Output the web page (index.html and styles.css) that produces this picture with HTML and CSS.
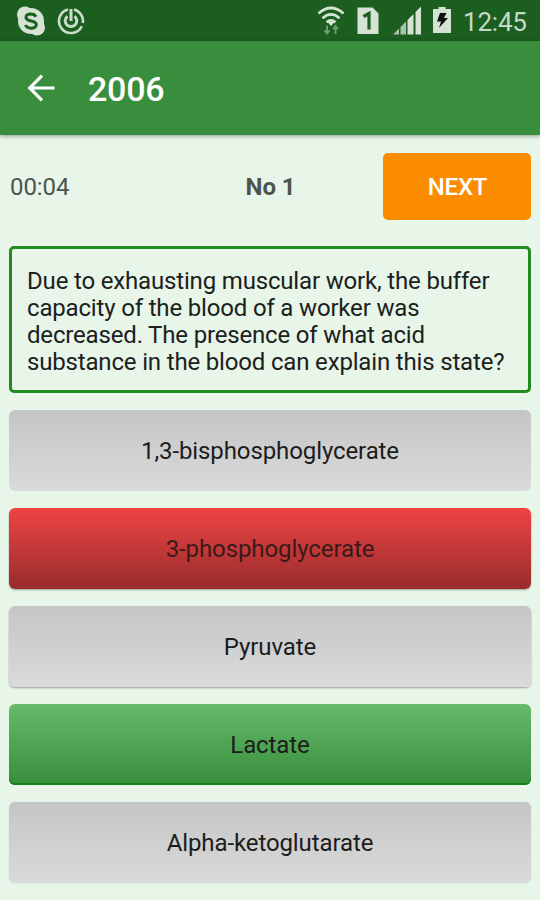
FILE: index.html
```html
<!DOCTYPE html>
<html lang="en">
<head>
  <meta charset="utf-8">
  <title>2006</title>
  <link rel="stylesheet" href="styles.css">
</head>
<body>
  <div class="status-bar">
    <svg class="skype" width="30" height="30" viewBox="0 0 30 30">
      <circle cx="15" cy="15" r="13" fill="#d5e3d5"/>
      <circle cx="9" cy="8.5" r="8" fill="#d5e3d5"/>
      <circle cx="21" cy="21.500" r="8" fill="#d5e3d5"/>
      <path d="M20 10.800C18.800 8.700 17 8.100 14.800 8.100c-2.800 0-4.800 1.300-4.800 3.400 0 4.800 10.300 2.200 10.300 7 0 2.300-2.300 3.700-5.200 3.700-2.700 0-4.700-1-5.700-3.200" fill="none" stroke="#1b5e20" stroke-width="3"/>
    </svg>
    <svg class="power" width="28" height="28" viewBox="0 0 28 28" fill="none" stroke="#c9dcc9">
      <path d="M17 2.400A12 12 0 0 1 25.800 16M24.800 19.200A12 12 0 1 1 11 2.400" stroke-width="2.600"/>
      <path d="M17.500 9.200A5.800 5.800 0 1 1 10.500 9.200M14 2v12" stroke-width="3"/>
    </svg>
    <svg class="wifi" width="28" height="32" viewBox="0 0 28 32" fill="none" stroke="#d5e3d5">
      <path d="M1.500 8.500Q14-2.500 26.500 8.500M5.500 13.200Q14 5.500 22.500 13.200M9.500 17.300Q14 13.500 18.500 17.300" stroke-width="2.700"/>
      <path d="M10.500 17h7L14 21z" fill="#d5e3d5" stroke="none"/>
      <path d="M10 20.500v8M7.500 25.500l2.500 3 2.500-3M18.500 29v-8M16 24l2.500-3 2.500 3" stroke="#6d9b6e" stroke-width="2"/>
    </svg>
    <svg class="sim" width="22" height="28" viewBox="0 0 22 28">
      <path d="M1 .5h14.500l6 6V27H.5V.5z" fill="#d5e3d5"/>
      <path d="M6.500 9.500L12 6.500V22.500" fill="none" stroke="#1b5e20" stroke-width="3.200"/>
    </svg>
    <svg class="signal" width="29" height="29" viewBox="0 0 29 29">
      <path d="M0 28.500L6 22.500v6zM7.500 21L13 15.500v13H7.500z" fill="#a9c4aa"/>
      <path d="M14.500 14L20.500 8v20.500h-6zM22.500 6L28 .5v28h-5.500z" fill="#d5e3d5"/>
    </svg>
    <svg class="battery" width="18" height="26" viewBox="0 0 18 26">
      <path d="M5.500 0h7v2H18V26H0V2h5.500z" fill="#d5e3d5"/>
      <path d="M7 6h6.500L11 11h4L6 21l2-6.500H4z" fill="#111"/>
    </svg>
    <span class="clock">12:45</span>
  </div>

  <div class="toolbar">
    <svg class="back" width="28" height="28" viewBox="0 0 28 28">
      <path d="M27.500 14H2M15 1.700L2.700 14 15 26.300" fill="none" stroke="#fff" stroke-width="3.200"/>
    </svg>
    <h1>2006</h1>
  </div>

  <div class="container">
    <div class="top-row">
      <span class="timer">00:04</span>
      <span class="number">No 1</span>
      <button class="next-btn">NEXT</button>
    </div>

    <div class="question">Due to exhausting muscular work, the buffer<br>capacity of the blood of a worker was<br>decreased. The presence of what acid<br>substance in the blood can explain this state?</div>

    <div class="answers">
      <button class="answer flat">1,3-bisphosphoglycerate</button>
      <button class="answer wrong">3-phosphoglycerate</button>
      <button class="answer">Pyruvate</button>
      <button class="answer correct">Lactate</button>
      <button class="answer last">Alpha-ketoglutarate</button>
    </div>
  </div>
</body>
</html>
```
FILE: styles.css
```css
body {
  margin: 0;
  height: 900px;
  overflow: hidden;
  font-family: Roboto, sans-serif;
  background-color: #e8f5e9;
}

.status-bar {
  display: flex;
  align-items: flex-start;
  box-sizing: border-box;
  height: 41px;
  padding: 0 13px 0 16px;
  background-color: #1b5e20;
}

.status-bar svg {
  flex: none;
}

.skype {
  margin-top: 6px;
}

.power {
  margin: 7px 0 0 11px;
}

.wifi {
  margin: 5px 0 0 auto;
}

.sim {
  margin: 7px 0 0 12px;
}

.signal {
  margin: 6px 0 0 14px;
}

.battery {
  margin: 7px 0 0 11px;
}

.clock {
  width: 64px;
  margin-left: 12px;
  font-size: 26px;
  line-height: 44px;
  letter-spacing: -0.2px;
  color: #c5dac6;
}

.toolbar {
  display: flex;
  align-items: center;
  height: 94px;
  padding-left: 27px;
  background-color: #388e3c;
  box-shadow: 0 1px 4px rgba(0, 0, 0, 0.4);
}

h1 {
  margin: 2px 0 0 33px;
  font-size: 34px;
  font-weight: 500;
  letter-spacing: -0.2px;
  color: #fff;
}

.container {
  padding: 17px 9px 0 9px;
}

.top-row {
  display: grid;
  grid-template-columns: 149px 1fr 148px;
  align-items: center;
  height: 68px;
}

.timer,
.number {
  padding-top: 2px;
  font-size: 24px;
  letter-spacing: -0.1px;
  color: #4d544e;
}

.timer {
  padding-left: 1px;
}

.number {
  font-weight: 700;
  text-align: center;
}

.next-btn {
  height: 67px;
  padding: 2px 0 0 1px;
  border: none;
  border-radius: 5px;
  font-family: inherit;
  font-size: 24px;
  font-weight: 500;
  letter-spacing: -0.2px;
  color: #fff;
  background-color: #fb8c00;
}

.question {
  box-sizing: border-box;
  height: 147px;
  margin-top: 26px;
  padding: 19px 0 0 15px;
  border: 3px solid #228b22;
  border-radius: 5px;
  font-size: 24px;
  line-height: 27px;
  letter-spacing: -0.17px;
  white-space: nowrap;
  color: #1b211c;
}

.answers {
  display: flex;
  flex-direction: column;
  gap: 17px;
  margin-top: 17px;
}

.answer {
  height: 81px;
  padding: 0;
  border: none;
  border-radius: 6px;
  font-family: inherit;
  font-size: 24px;
  letter-spacing: -0.1px;
  color: #1c1c1c;
  background: linear-gradient(#c5c5c5, #dadada);
  box-shadow: 0 1px 2px rgba(0, 0, 0, 0.35);
}

.answer.flat {
  box-shadow: none;
}

.answer.wrong {
  color: #3a1a1a;
  background: linear-gradient(#ef4444, #982c2c);
}

.answer.correct {
  background: linear-gradient(#66bb6a, #388e3c);
  box-shadow: inset 0 -2px 0 #168018;
}

.answer.last {
  box-shadow: 0 0 1px rgba(0, 0, 0, 0.25);
}
```
